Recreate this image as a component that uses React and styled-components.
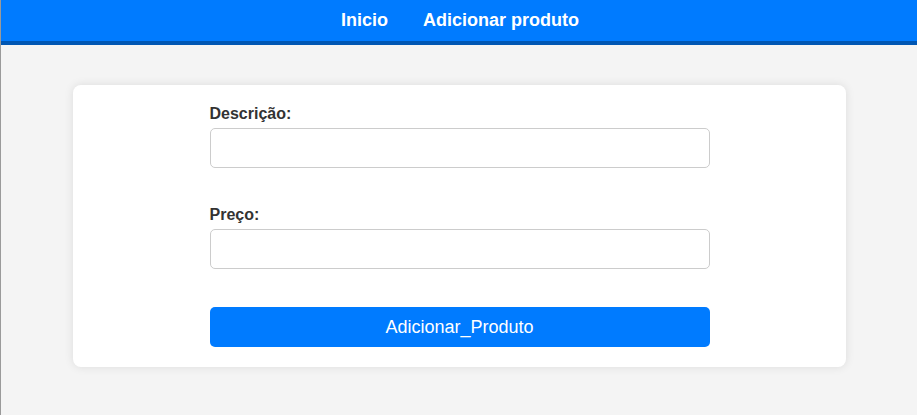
import React from "react";
import styled, { createGlobalStyle } from "styled-components";

const Global = createGlobalStyle`
  html, body { margin: 0; padding: 0; }
  body {
    background: #f4f4f4;
    font-family: "Liberation Sans", Arial, sans-serif;
    border-left: 1px solid #9a9a9a;
    min-height: 100vh;
    box-sizing: border-box;
  }
`;

const Header = styled.header`
  background: #007bff;
  border-bottom: 4px solid #0056b3;
  height: 41px;
  padding-left: 2px;
  display: flex;
  align-items: center;
  justify-content: center;
  gap: 35px;
`;

const NavLink = styled.a`
  color: #fff;
  font-weight: bold;
  font-size: 18px;
  text-decoration: none;
  line-height: 21px;
  margin-top: -1px;
`;

const Main = styled.main`
  padding: 40px 71px 0 72px;
`;

const Card = styled.div`
  background: #fff;
  border-radius: 8px;
  box-shadow: 0 0 10px rgba(0, 0, 0, 0.1);
  padding: 20px 0;
  display: flex;
  justify-content: center;
`;

const Form = styled.form`
  width: 500px;
  display: flex;
  flex-direction: column;
`;

const Field = styled.div`
  display: flex;
  flex-direction: column;
  margin-bottom: 38px;
`;

const Label = styled.label`
  font-size: 16px;
  font-weight: bold;
  color: #333;
  line-height: 18px;
  margin-bottom: 5px;
`;

const Input = styled.input`
  box-sizing: border-box;
  height: 40px;
  width: 100%;
  border: 1px solid #ccc;
  border-radius: 5px;
  padding: 0 10px;
  font-size: 16px;
  font-family: inherit;
  outline: none;
`;

const Button = styled.button`
  height: 40px;
  width: 100%;
  background: #007bff;
  color: #fff;
  border: none;
  border-radius: 5px;
  font-size: 18px;
  font-family: "Liberation Sans", Arial, sans-serif;
  cursor: pointer;
`;

export default function App() {
  return (
    <>
      <Global />
      <Header>
        <NavLink href="#">Inicio</NavLink>
        <NavLink href="#">Adicionar produto</NavLink>
      </Header>
      <Main>
        <Card>
          <Form onSubmit={(e) => e.preventDefault()}>
            <Field>
              <Label htmlFor="descricao">Descrição:</Label>
              <Input id="descricao" type="text" />
            </Field>
            <Field>
              <Label htmlFor="preco">Preço:</Label>
              <Input id="preco" type="text" />
            </Field>
            <Button type="submit">Adicionar_Produto</Button>
          </Form>
        </Card>
      </Main>
    </>
  );
}
